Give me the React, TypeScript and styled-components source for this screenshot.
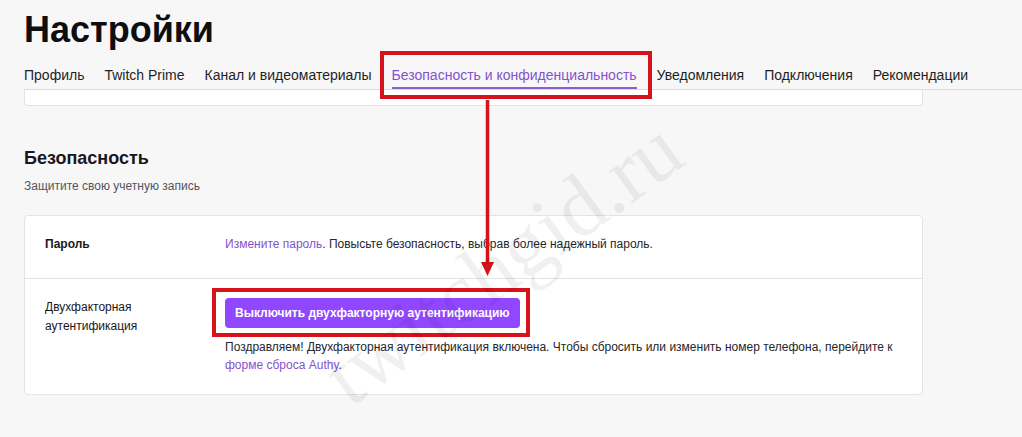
import styled, { createGlobalStyle } from 'styled-components';

const GlobalStyle = createGlobalStyle`
  html, body {
    margin: 0;
    padding: 0;
    background: #f7f7f8;
  }
  body {
    font-family: 'Liberation Sans', Arial, sans-serif;
    color: #0e0e10;
  }
`;

const RED = '#d6121b';
const PURPLE = '#9147ff';
const LINK = '#8452cc';

const Page = styled.div`
  position: relative;
  width: 1022px;
  height: 437px;
  overflow: hidden;
  background: #f7f7f8;
`;

const Title = styled.h1`
  margin: 4px 0 0 24px;
  font-size: 36px;
  line-height: 52px;
  font-weight: 700;
  color: #0e0e10;
`;

const TabBar = styled.nav`
  display: flex;
  gap: 20px;
  margin-left: 24px;
  border-bottom: 1px solid #dcdce0;
`;

const Tab = styled.div<{ $active?: boolean }>`
  position: relative;
  padding: 9px 0 2px;
  font-size: 14px;
  line-height: 20px;
  white-space: nowrap;
  color: ${(p) => (p.$active ? LINK : '#1f1f23')};
  border-bottom: 2px solid ${(p) => (p.$active ? '#8a5fd0' : 'transparent')};
`;

const Highlight = styled.span<{ $t: number; $r: number; $b: number; $l: number }>`
  position: absolute;
  top: ${(p) => p.$t}px;
  right: ${(p) => p.$r}px;
  bottom: ${(p) => p.$b}px;
  left: ${(p) => p.$l}px;
  border: 4px solid ${RED};
  pointer-events: none;
`;

const ClippedCard = styled.div`
  width: 897px;
  height: 15px;
  margin-left: 24px;
  background: #fff;
  border: 1px solid #e3e3e6;
  border-top: none;
  border-radius: 0 0 4px 4px;
`;

const Section = styled.section`
  margin: 40px 0 0 24px;
  width: 899px;
`;

const SectionTitle = styled.h2`
  margin: 0;
  font-size: 18px;
  line-height: 24px;
  font-weight: 700;
  color: #18181b;
`;

const SectionHint = styled.p`
  margin: 8px 0 0;
  font-size: 12px;
  line-height: 16px;
  color: #53535f;
`;

const Card = styled.div`
  margin-top: 21px;
  background: #fff;
  border: 1px solid #e3e3e6;
  border-radius: 4px;
`;

const Row = styled.div<{ $pb: number; $divider?: boolean }>`
  display: grid;
  grid-template-columns: 160px 1fr;
  column-gap: 20px;
  padding: 19px 20px ${(p) => p.$pb}px;
  border-top: ${(p) => (p.$divider ? '1px solid #e3e3e6' : 'none')};
`;

const Label = styled.div<{ $strong?: boolean }>`
  font-size: 12px;
  line-height: 19px;
  font-weight: ${(p) => (p.$strong ? 700 : 400)};
  color: #18181b;
`;

const Value = styled.div`
  font-size: 12px;
  line-height: 18px;
  color: #26262c;
`;

const Link = styled.a`
  color: ${LINK};
  text-decoration: none;
`;

const ButtonWrap = styled.div`
  position: relative;
  display: inline-block;
`;

const Button = styled.button`
  height: 30px;
  padding: 0 10px;
  border: none;
  border-radius: 4px;
  background: ${PURPLE};
  color: #fff;
  font-family: 'Liberation Sans', Arial, sans-serif;
  font-size: 12px;
  font-weight: 700;
  cursor: pointer;
`;

const Note = styled.p`
  margin: 10px 0 0;
  font-size: 12px;
  line-height: 18px;
  color: #26262c;
`;

const Arrow = styled.svg`
  position: absolute;
  left: 480px;
  top: 100px;
  pointer-events: none;
`;

const Watermark = styled.div`
  position: absolute;
  left: 502px;
  top: 262px;
  transform: translate(-50%, -50%) rotate(-36deg);
  font-family: 'Liberation Serif', 'Times New Roman', serif;
  font-size: 86px;
  color: rgba(0, 0, 0, 0.06);
  white-space: nowrap;
  pointer-events: none;
`;

const tabs = [
  'Профиль',
  'Twitch Prime',
  'Канал и видеоматериалы',
  'Безопасность и конфиденциальность',
  'Уведомления',
  'Подключения',
  'Рекомендации',
];

export default function App() {
  return (
    <Page>
      <GlobalStyle />
      <Title>Настройки</Title>
      <TabBar>
        {tabs.map((t, i) => (
          <Tab key={t} $active={i === 3}>
            {t}
            {i === 3 && <Highlight $t={-5} $r={-15} $b={-12} $l={-12} />}
          </Tab>
        ))}
      </TabBar>
      <ClippedCard />

      <Section>
        <SectionTitle>Безопасность</SectionTitle>
        <SectionHint>Защитите свою учетную запись</SectionHint>
        <Card>
          <Row $pb={24}>
            <Label $strong>Пароль</Label>
            <Value>
              <Link href="#">Измените пароль</Link>. Повысьте безопасность, выбрав более надежный пароль.
            </Value>
          </Row>
          <Row $pb={20} $divider>
            <Label>Двухфакторная аутентификация</Label>
            <Value>
              <ButtonWrap>
                <Button>Выключить двухфакторную аутентификацию</Button>
                <Highlight $t={-10} $r={-10} $b={-9} $l={-13} />
              </ButtonWrap>
              <Note>
                Поздравляем! Двухфакторная аутентификация включена. Чтобы сбросить или изменить номер телефона, перейдите к{' '}
                <Link href="#">форме сброса Authy</Link>.
              </Note>
            </Value>
          </Row>
        </Card>
      </Section>

      <Arrow width="16" height="180" viewBox="0 0 16 180">
        <line x1="7.5" y1="0" x2="7.5" y2="166" stroke={RED} strokeWidth="3.5" />
        <polygon points="1,162 14,162 7.5,176" fill={RED} />
      </Arrow>
      <Watermark>twitchgid.ru</Watermark>
    </Page>
  );
}
